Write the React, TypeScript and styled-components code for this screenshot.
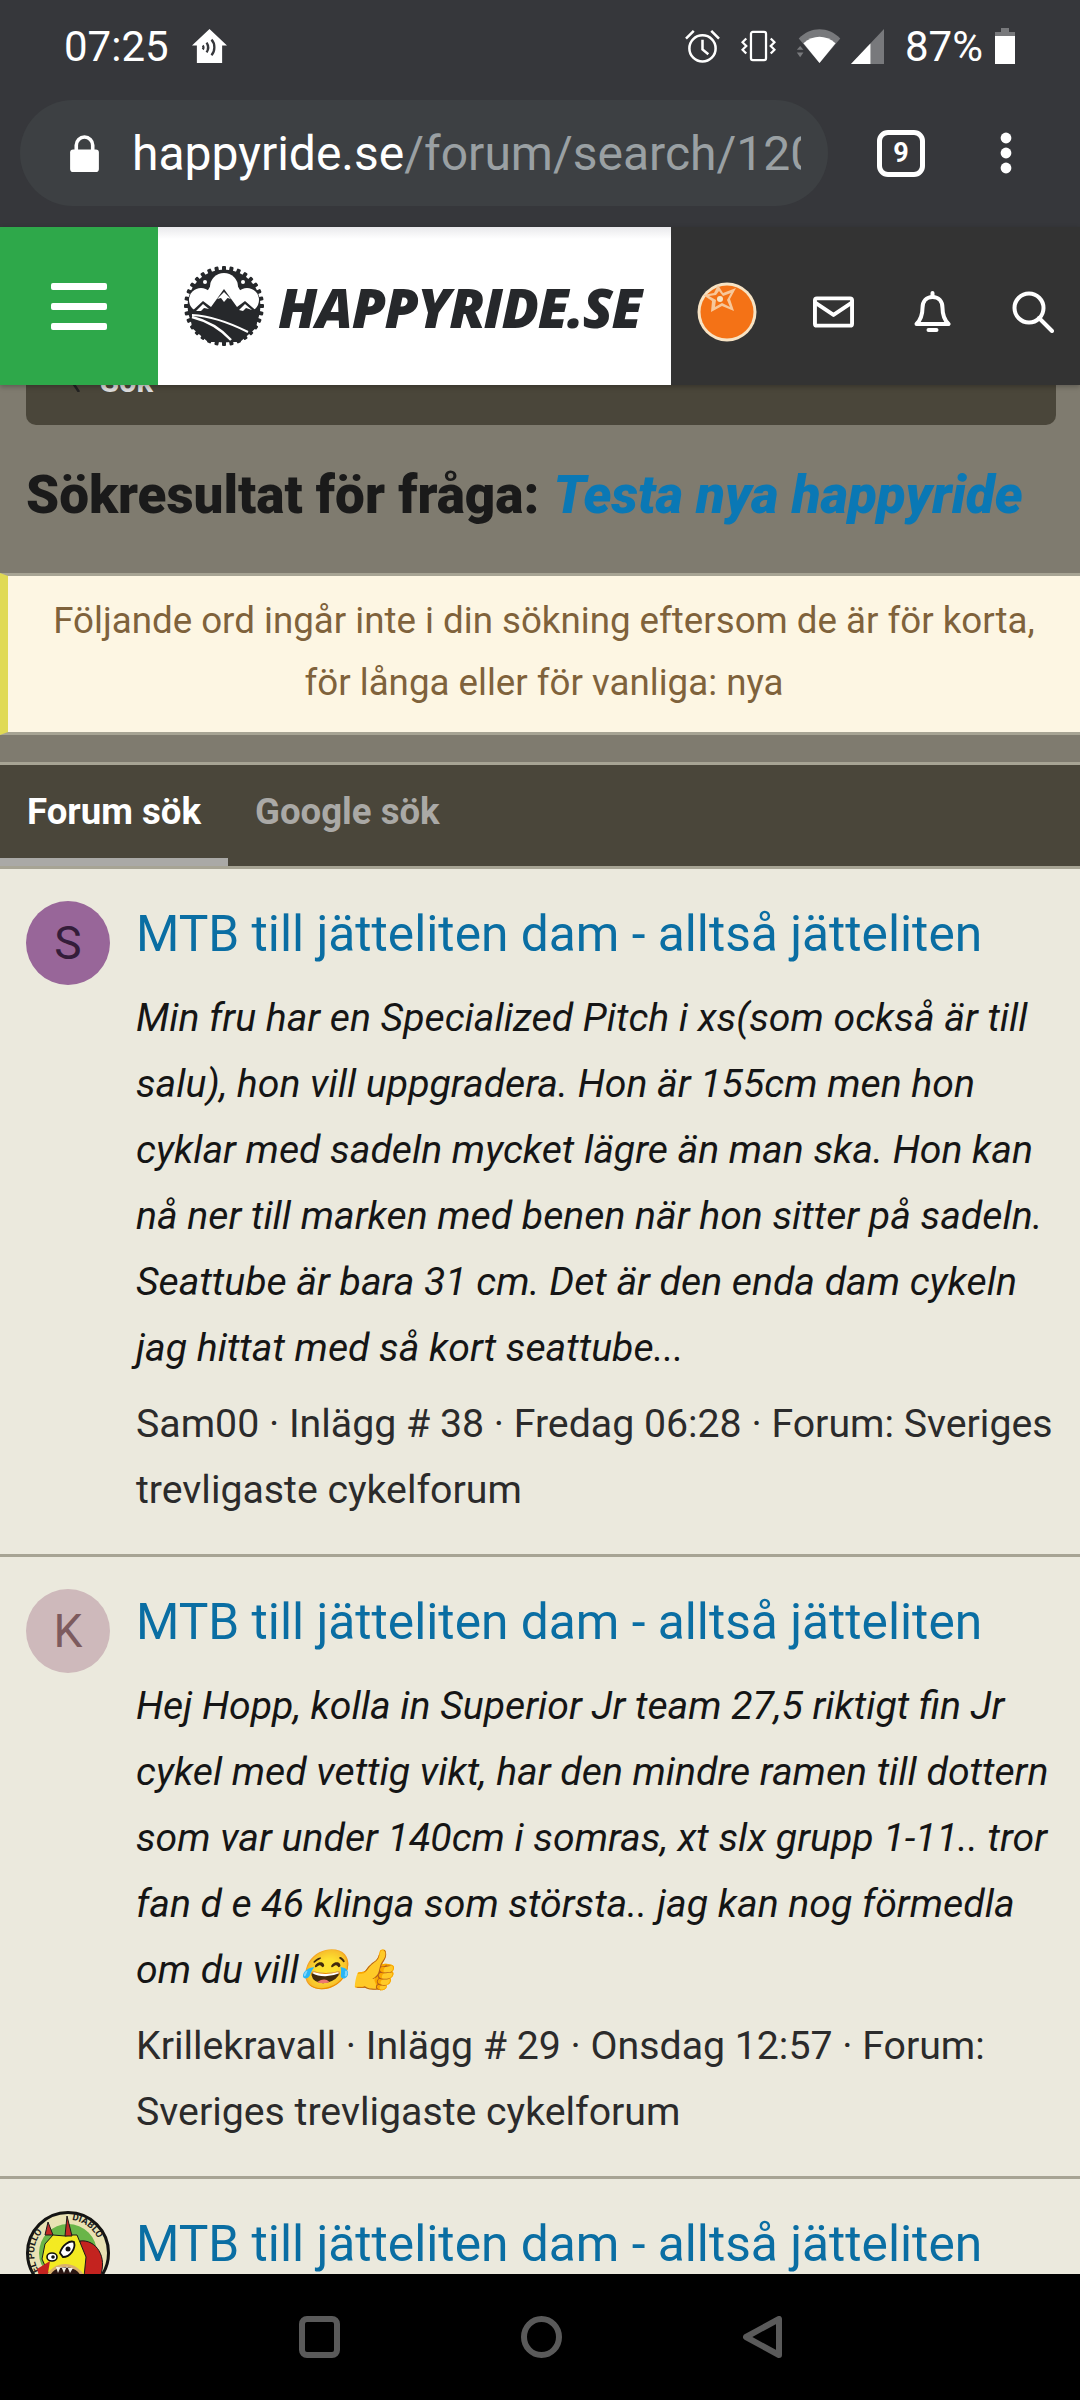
import React from "react";
import styled, { createGlobalStyle } from "styled-components";

const GlobalStyle = createGlobalStyle`
  *, *::before, *::after {
    box-sizing: border-box;
  }
  html, body {
    margin: 0;
    padding: 0;
    background: #000;
    font-family: Roboto, "Liberation Sans", sans-serif;
  }
`;

const Screen = styled.div`
  width: 1080px;
  height: 2400px;
  display: flex;
  flex-direction: column;
  overflow: hidden;
  background: #ebe9dd;
`;

const Chrome = styled.div`
  height: 227px;
  flex: none;
  background: #36373b;
  color: #fff;
`;

const StatusBar = styled.div`
  height: 100px;
  display: flex;
  align-items: center;
  padding: 0 65px 8px 64px;
`;

const Clock = styled.span`
  font-size: 42px;
  margin-right: 23px;
`;

const StatusIcon = styled.svg<{ $gap: number }>`
  margin-left: ${(p) => p.$gap}px;
  flex: none;
`;

const StatusRight = styled.div`
  margin-left: auto;
  display: flex;
  align-items: center;
`;

const Battery = styled.span`
  font-size: 42px;
  margin-left: 20px;
`;

const UrlRow = styled.div`
  display: flex;
  align-items: center;
  padding-left: 20px;
`;

const UrlPill = styled.div`
  width: 808px;
  height: 106px;
  border-radius: 53px;
  background: #3d4043;
  display: flex;
  align-items: center;
  padding-left: 50px;
  font-size: 48px;
`;

const UrlText = styled.div`
  margin-left: 33px;
  width: 669px;
  overflow: hidden;
  white-space: nowrap;
`;

const UrlPath = styled.span`
  color: #9aa0a3;
`;

const TabCount = styled.div`
  margin-left: 49px;
  width: 48px;
  height: 47px;
  border: 5px solid #fff;
  border-radius: 11px;
  display: flex;
  align-items: center;
  justify-content: center;
  font-size: 27px;
  font-weight: 700;
`;

const MenuDots = styled.svg`
  margin-left: 75px;
`;

const SiteHeader = styled.header`
  height: 158px;
  flex: none;
  display: flex;
  background: #333;
  position: relative;
  z-index: 1;
  box-shadow: 0 2px 5px rgba(0, 0, 0, 0.25);
`;

const BurgerBox = styled.div`
  width: 158px;
  background: #2ea84a;
  display: flex;
  flex-direction: column;
  align-items: center;
  justify-content: center;
  gap: 13px;
`;

const BurgerBar = styled.span`
  width: 56px;
  height: 7px;
  border-radius: 2px;
  background: #fff;
`;

const LogoBox = styled.div`
  width: 513px;
  background: linear-gradient(#e9e9ec, #fff 12px);
  display: flex;
  align-items: center;
  padding-left: 26px;
  gap: 14px;
`;

const LogoText = styled.span`
  font-family: "Open Sans", sans-serif;
  font-size: 55px;
  font-weight: 800;
  font-style: italic;
  color: #26282b;
  letter-spacing: -1.4px;
  white-space: nowrap;
`;

const HeaderIcons = styled.div`
  flex: 1;
  display: flex;
  align-items: center;
  padding: 12px 0 0 26px;
`;

const HeaderIcon = styled.svg<{ $gap: number }>`
  margin-left: ${(p) => p.$gap}px;
  flex: none;
`;

const TitleArea = styled.div`
  height: 188px;
  flex: none;
  background: #7f7b6f;
  padding: 0 24px 0 26px;
`;

const Crumb = styled.div`
  height: 100px;
  margin-top: -60px;
  background: #4a463a;
  border-radius: 0 0 10px 10px;
  display: flex;
  align-items: flex-start;
  gap: 18px;
  padding: 37px 0 0 40px;
  color: #ddd;
  font-weight: 700;
  font-size: 31px;
  line-height: 40px;
`;

const PageTitle = styled.h1`
  margin: 39px 0 0;
  font-size: 53px;
  line-height: 62px;
  font-weight: 900;
  color: #1a1a1a;
  white-space: nowrap;
`;

const TitleQuery = styled.em`
  color: #0a78b5;
  margin-left: 14px;
`;

const Notice = styled.div`
  flex: none;
  height: 162px;
  background: #fdf6e3;
  border-top: 3px solid #a7a494;
  border-bottom: 3px solid #a7a494;
  border-left: 8px solid #e0da55;
  color: #7f623b;
  font-size: 36.7px;
  line-height: 62px;
  text-align: center;
  padding-top: 14px;
`;

const TabGap = styled.div`
  height: 27px;
  flex: none;
  background: #7f7b6f;
`;

const Tabs = styled.div`
  height: 107px;
  flex: none;
  background: #4a463a;
  border-top: 3px solid #a7a494;
  border-bottom: 3px solid #a7a494;
  display: flex;
`;

const Tab = styled.div<{ $active?: boolean }>`
  padding: 0 27px;
  display: flex;
  align-items: center;
  height: 101px;
  font-size: 36.6px;
  font-weight: 700;
  color: ${(p) => (p.$active ? "#fff" : "#aaa9a6")};
  border-bottom: 8px solid ${(p) => (p.$active ? "#aaa9a6" : "transparent")};
`;

const Results = styled.div`
  flex: 1;
  overflow: hidden;
`;

const Result = styled.div`
  display: flex;
  padding: 32px 0 0 26px;
  border-bottom: 3px solid #a7a494;
`;

const Avatar = styled.div<{ $bg: string; $fg: string }>`
  width: 84px;
  height: 84px;
  flex: none;
  border-radius: 50%;
  background: ${(p) => p.$bg};
  color: ${(p) => p.$fg};
  display: flex;
  align-items: center;
  justify-content: center;
  font-size: 46px;
  margin-right: 26px;
`;

const ResultBody = styled.div`
  flex: 1;
  min-width: 0;
`;

const ResultTitle = styled.div`
  font-size: 49.7px;
  line-height: 66px;
  color: #0a6ea3;
  white-space: nowrap;
`;

const Snippet = styled.div`
  margin-top: 18px;
  font-size: 39.2px;
  line-height: 66px;
  font-style: italic;
  color: #151515;
  white-space: nowrap;
`;

const Meta = styled.div`
  margin: 10px 0 31px;
  font-size: 39.25px;
  line-height: 66px;
  color: #2b2b2b;
  white-space: nowrap;
`;

const NavBar = styled.nav`
  height: 126px;
  flex: none;
  background: #000;
  display: flex;
  align-items: center;
  justify-content: center;
  gap: 181px;
  position: relative;
  z-index: 1;
`;

function CogLogo() {
  const teeth = Array.from({ length: 32 }, (_, i) => (i * 360) / 32);
  return (
    <svg width="80" height="80" viewBox="0 0 80 80">
      {teeth.map((a) => (
        <rect key={a} x="38" y="0" width="4" height="5" rx="1" fill="#26282b" transform={`rotate(${a} 40 40)`} />
      ))}
      <circle cx="40" cy="40" r="36.5" fill="#26282b" />
      {/* white lobes between the spider arms */}
      <circle cx="17" cy="34" r="12" fill="#fff" />
      <circle cx="63" cy="34" r="12" fill="#fff" />
      <circle cx="40" cy="21" r="14" fill="#fff" />
      <path d="M12 44 L30 14 H50 L68 44Z" fill="#fff" />
      <circle cx="21" cy="16" r="5" fill="#26282b" />
      <circle cx="21" cy="16" r="2" fill="#fff" />
      <circle cx="59" cy="16" r="5" fill="#26282b" />
      <circle cx="59" cy="16" r="2" fill="#fff" />
      {/* mountains */}
      <path d="M6 47 L19 35 L27 41 L40 23 L53 41 L61 35 L75 47 L72 62 L56 76 H24 L8 62Z" fill="#26282b" />
      <path d="M33 33 L40 26 L47 33 L43.5 32 L40 36 L37 32Z M12 45 L19 38 L25 43 L20 42 L17 45Z M55 44 L61 38 L68 44 L62 42 L59 45Z" fill="#fff" />
      {/* road */}
      <path d="M8 49 C28 50 46 57 64 66" stroke="#fff" strokeWidth="2" fill="none" />
      <path d="M8 51 C24 55 36 62 47 74" stroke="#fff" strokeWidth="2.5" fill="none" />
    </svg>
  );
}

function PolloAvatar() {
  return (
    <svg width="84" height="84" viewBox="0 0 84 84">
      <defs>
        <path id="polloLeft" d="M13 60 A33 33 0 0 1 29 12" />
        <path id="polloRight" d="M46 9 A33 33 0 0 1 74 34" />
      </defs>
      <circle cx="42" cy="42" r="40.5" fill="#e9e2b4" stroke="#141414" strokeWidth="3" />
      <circle cx="42" cy="42" r="29" fill="#69b548" />
      <text fontFamily="Roboto, sans-serif" fontSize="9.5" fontWeight="700" fill="#1c1c1c">
        <textPath href="#polloLeft">EL POLLO</textPath>
      </text>
      <text fontFamily="Roboto, sans-serif" fontSize="9.5" fontWeight="700" fill="#1c1c1c">
        <textPath href="#polloRight">DIABLO</textPath>
      </text>
      {/* red wattle behind the head */}
      <path d="M54 30 C70 28 82 46 74 66 L50 66Z" fill="#c4231f" stroke="#1a1a1a" strokeWidth="1" />
      {/* head */}
      <path d="M19 33 L27 24 L39 25 L45 24 L51 24 L60 46 L58 66 H24 L16 48Z" fill="#f3ea22" stroke="#1a1a1a" strokeWidth="1" />
      {/* horns */}
      <path d="M39 25 L41 5 L46 25Z M19 24 L22 11 L27 24Z" fill="#c12a25" stroke="#1a1a1a" strokeWidth="1" />
      {/* eyes */}
      <path d="M34 42 C36 34 44 29 48 31 C50 38 44 46 37 46Z" fill="#fff" stroke="#111" strokeWidth="1.8" />
      <circle cx="42" cy="38" r="2.5" fill="#111" />
      <ellipse cx="26" cy="46" rx="5" ry="4" fill="#fff" stroke="#111" strokeWidth="1.6" />
      <circle cx="27" cy="46" r="1.8" fill="#111" />
      {/* beak */}
      <path d="M21 68 C26 50 52 50 58 68Z" fill="#2a1512" stroke="#d9b06c" strokeWidth="3" />
      <path d="M30 56 L32 62 L35 55 L38 62 L41 55 L44 62 L47 57Z" fill="#f2f0e6" />
      <path d="M11 58 L24 50 L21 68 L14 68Z" fill="#c4231f" />
    </svg>
  );
}

export default function App() {
  return (
    <Screen>
      <GlobalStyle />
      <Chrome>
        <StatusBar>
          <Clock>07:25</Clock>
          <svg width="35" height="34" viewBox="0 0 36 35">
            <path d="M18 0 L36 17 H31 V35 H5 V17 H0Z" fill="#fff" />
            <path d="M20 11 C24 15 24 23 20 27 M15 14 C17 17 17 21 15 24 M11 17 C12 18 12 20 11 21" stroke="#36373b" strokeWidth="2.4" fill="none" />
          </svg>
          <StatusRight>
            <svg width="35" height="34" viewBox="0 0 36 35" fill="none" stroke="#fff" strokeWidth="2.6">
              <circle cx="18" cy="20" r="13.5" />
              <path d="M18 11 V21 L24 26 M1 10 L9 2 M35 10 L27 2" />
            </svg>
            <StatusIcon $gap={21} width="35" height="32" viewBox="0 0 36 34" fill="none" stroke="#fff" strokeWidth="2.4">
              <rect x="10" y="2" width="16" height="30" rx="2" />
              <path d="M5 9 L1 13 L5 17 L1 21 L5 25 M31 9 L35 13 L31 17 L35 21 L31 25" />
            </StatusIcon>
            <StatusIcon $gap={20} width="47" height="34" viewBox="0 0 48 36">
              <path d="M2 10 C15 -3 33 -3 46 10 L24 36Z" fill="#78797c" />
              <path d="M7 15 C18 6 30 6 41 15 L24 36Z" fill="#fff" />
              <path d="M0 22 L3.5 18 L7 22Z M0 25 L7 25 L3.5 30Z" fill="#78797c" />
            </StatusIcon>
            <StatusIcon $gap={7} width="35" height="35" viewBox="0 0 34 36">
              <path d="M34 0 V36 H0Z" fill="#78797c" />
              <path d="M20 15 V36 H0Z" fill="#fff" />
            </StatusIcon>
            <Battery>87%</Battery>
            <StatusIcon $gap={12} width="20" height="36" viewBox="0 0 20 36">
              <path d="M6 0 H14 V4 H20 V36 H0 V4 H6Z" fill="#fff" />
              <path d="M6 0 H14 V4 H20 V8 H0 V4 H6Z" fill="#78797c" />
            </StatusIcon>
          </StatusRight>
        </StatusBar>
        <UrlRow>
          <UrlPill>
            <svg width="29" height="37" viewBox="0 0 28 36">
              <path d="M6 15 V10 A8 8 0 0 1 22 10 V15" fill="none" stroke="#fff" strokeWidth="3.5" />
              <rect x="0" y="14" width="28" height="22" rx="3" fill="#fff" />
            </svg>
            <UrlText>
              happyride.se<UrlPath>/forum/search/120</UrlPath>
            </UrlText>
          </UrlPill>
          <TabCount>9</TabCount>
          <MenuDots width="12" height="42" viewBox="0 0 12 42">
            <circle cx="6" cy="6" r="5.4" fill="#fff" />
            <circle cx="6" cy="21" r="5.4" fill="#fff" />
            <circle cx="6" cy="36" r="5.4" fill="#fff" />
          </MenuDots>
        </UrlRow>
      </Chrome>

      <SiteHeader>
        <BurgerBox>
          <BurgerBar />
          <BurgerBar />
          <BurgerBar />
        </BurgerBox>
        <LogoBox>
          <CogLogo />
          <LogoText>HAPPYRIDE.SE</LogoText>
        </LogoBox>
        <HeaderIcons>
          <svg width="60" height="60" viewBox="0 0 60 60">
            <circle cx="30" cy="30" r="29.5" fill="#f7e3c4" />
            <circle cx="30" cy="30" r="26.5" fill="#f47216" />
            <path d="M21 3 L26 11 L39 6 L33 17 L37 29 L25 24 L14 30 L15 19 L6 13 L17 11Z" fill="#f7c79a" />
            <path d="M22 9 L26 14 L34 11 L30 18 L33 25 L25 21 L18 25 L19 18 L12 14 L19 13Z" fill="#f47216" />
            <circle cx="23" cy="17" r="3" fill="#f7e3c4" />
          </svg>
          <HeaderIcon $gap={56} width="41" height="32" viewBox="0 0 42 32" fill="none" stroke="#fff" strokeWidth="4" strokeLinejoin="round" strokeLinecap="round">
            <rect x="2" y="2" width="38" height="28" rx="2" />
            <path d="M3 7 L21 19 L39 7" />
          </HeaderIcon>
          <HeaderIcon $gap={60} width="37" height="42" viewBox="0 0 36 42" fill="none" stroke="#fff" strokeWidth="4" strokeLinejoin="round" strokeLinecap="round">
            <path d="M2 33 C7 28 8 22 8 17 C8 10 12 6 18 6 C24 6 28 10 28 17 C28 22 29 28 34 33Z" />
            <path d="M18 2 V6 M14 39 H22" />
          </HeaderIcon>
          <HeaderIcon $gap={61} width="42" height="42" viewBox="0 0 42 42" fill="none" stroke="#fff" strokeWidth="4" strokeLinecap="round">
            <circle cx="17" cy="17" r="14.5" />
            <path d="M27 27 L40 40" />
          </HeaderIcon>
        </HeaderIcons>
      </SiteHeader>

      <TitleArea>
        <Crumb>
          <svg width="16" height="30" viewBox="0 0 16 30" fill="none" stroke="#222" strokeWidth="2.5">
            <path d="M14 2 L3 15 L13 30" />
          </svg>
          Sök
        </Crumb>
        <PageTitle>
          Sökresultat för fråga:
          <TitleQuery>Testa nya happyride</TitleQuery>
        </PageTitle>
      </TitleArea>

      <Notice>
        Följande ord ingår inte i din sökning eftersom de är för korta,
        <br />
        för långa eller för vanliga: nya
      </Notice>
      <TabGap />
      <Tabs>
        <Tab $active>Forum sök</Tab>
        <Tab>Google sök</Tab>
      </Tabs>

      <Results>
        <Result>
          <Avatar $bg="#986699" $fg="#341d3a">S</Avatar>
          <ResultBody>
            <ResultTitle>MTB till jätteliten dam - alltså jätteliten</ResultTitle>
            <Snippet>
              Min fru har en Specialized Pitch i xs(som också är till
              <br />
              salu), hon vill uppgradera. Hon är 155cm men hon
              <br />
              cyklar med sadeln mycket lägre än man ska. Hon kan
              <br />
              nå ner till marken med benen när hon sitter på sadeln.
              <br />
              Seattube är bara 31 cm. Det är den enda dam cykeln
              <br />
              jag hittat med så kort seattube...
            </Snippet>
            <Meta>
              Sam00 · Inlägg # 38 · Fredag 06:28 · Forum: Sveriges
              <br />
              trevligaste cykelforum
            </Meta>
          </ResultBody>
        </Result>
        <Result>
          <Avatar $bg="#ceb9bb" $fg="#7d5b5e">K</Avatar>
          <ResultBody>
            <ResultTitle>MTB till jätteliten dam - alltså jätteliten</ResultTitle>
            <Snippet>
              Hej Hopp, kolla in Superior Jr team 27,5 riktigt fin Jr
              <br />
              cykel med vettig vikt, har den mindre ramen till dottern
              <br />
              som var under 140cm i somras, xt slx grupp 1-11.. tror
              <br />
              fan d e 46 klinga som största.. jag kan nog förmedla
              <br />
              om du vill😂👍
            </Snippet>
            <Meta>
              Krillekravall · Inlägg # 29 · Onsdag 12:57 · Forum:
              <br />
              Sveriges trevligaste cykelforum
            </Meta>
          </ResultBody>
        </Result>
        <Result>
          <Avatar $bg="#e9e2b4" $fg="#222">
            <PolloAvatar />
          </Avatar>
          <ResultBody>
            <ResultTitle>MTB till jätteliten dam - alltså jätteliten</ResultTitle>
          </ResultBody>
        </Result>
      </Results>

      <NavBar>
        <svg width="41" height="42" viewBox="0 0 41 42" fill="none" stroke="#5a5a5a" strokeWidth="6">
          <rect x="3" y="3" width="35" height="36" rx="5" />
        </svg>
        <svg width="41" height="42" viewBox="0 0 41 42" fill="none" stroke="#5a5a5a" strokeWidth="6">
          <ellipse cx="20.5" cy="21" rx="17.5" ry="18" />
        </svg>
        <svg width="39" height="42" viewBox="0 0 39 42" fill="none" stroke="#5a5a5a" strokeWidth="6" strokeLinejoin="round">
          <path d="M36 3 V39 L3 21Z" />
        </svg>
      </NavBar>
    </Screen>
  );
}
